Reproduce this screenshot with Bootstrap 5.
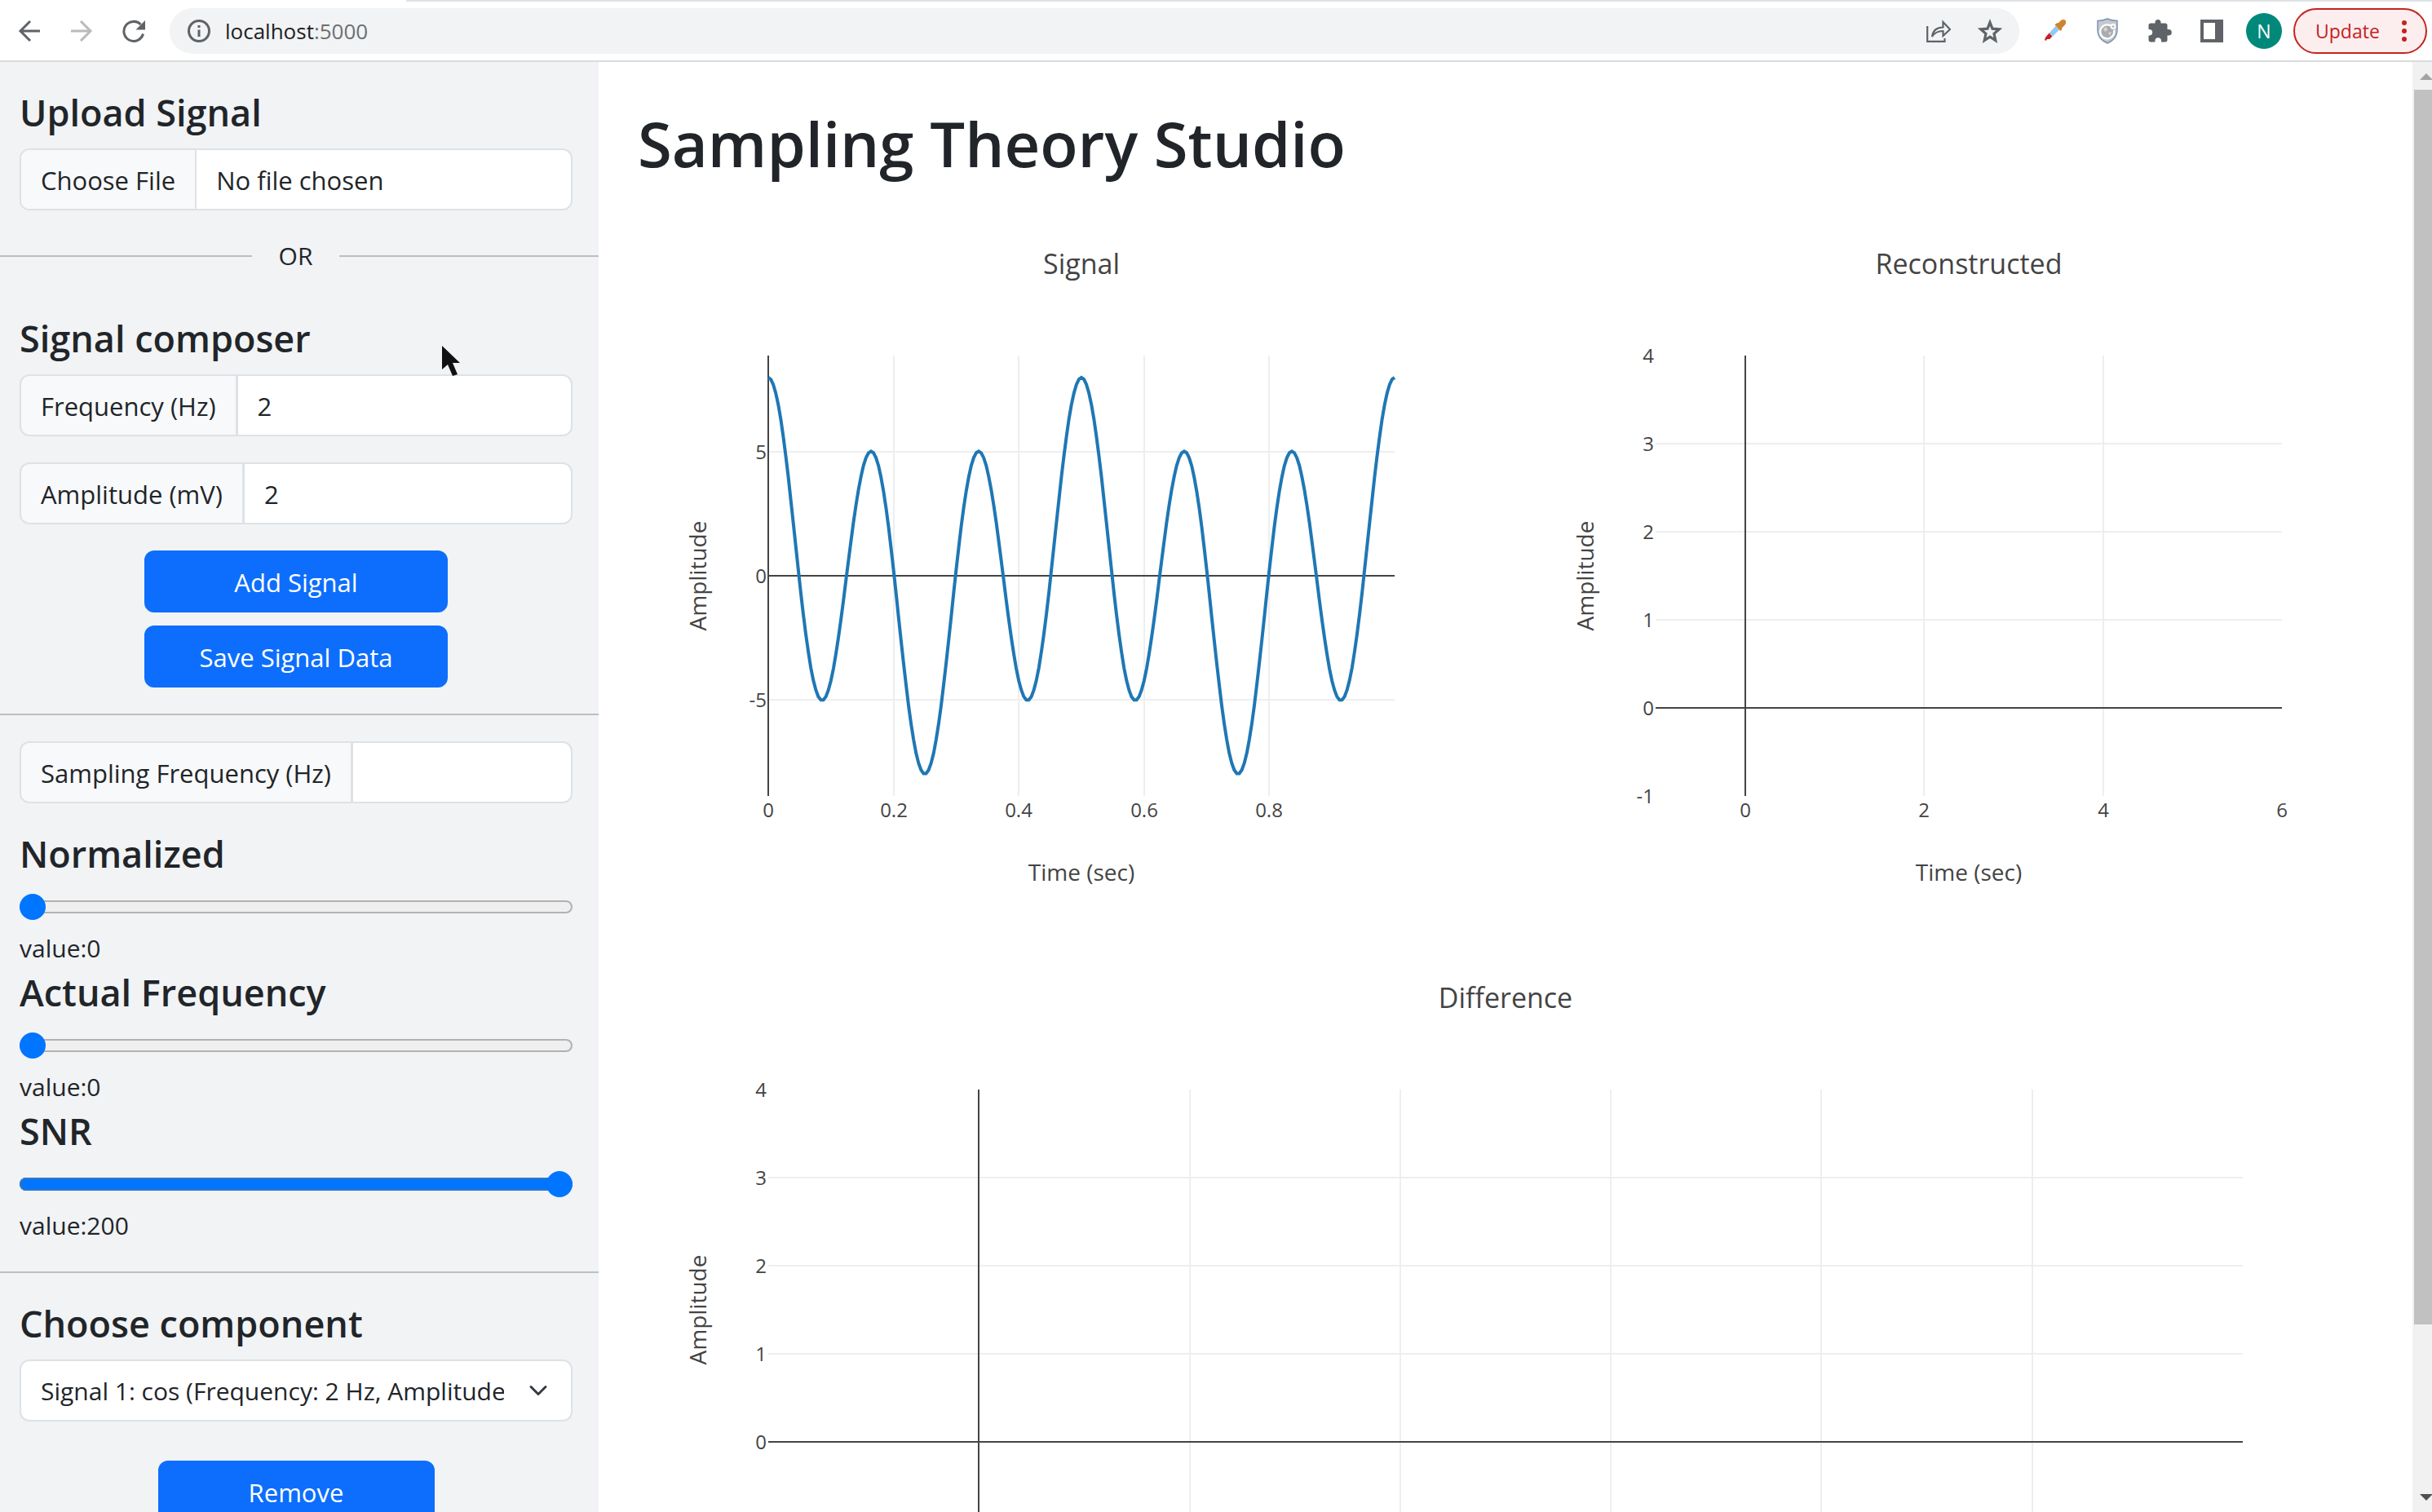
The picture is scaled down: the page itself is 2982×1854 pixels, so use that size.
<!DOCTYPE html>
<html lang="en">
<head>
<meta charset="utf-8">
<meta name="viewport" content="width=device-width, initial-scale=1">
<title>Sampling Theory Studio</title>
<link href="https://cdn.jsdelivr.net/npm/bootstrap@5.3.0/dist/css/bootstrap.min.css" rel="stylesheet">
<style>
  :root { font-size: 32px; }
  body { font-family: "Open Sans", "Noto Sans", sans-serif; font-size: 30px; line-height: 48px; color: #212529; background: #fff; }

  /* browser bar */
  .tab-edge { height: 2px; margin-left: 498px; background: #dee1e6; }
  .browser-bar { border-bottom: 2px solid #dadbdc; }
  .bar-row { height: 72px; padding: 0 6px 0 22px; }
  .bar-row button { background: none; border: 0; padding: 0; display: block; line-height: 0; color: #5f6368; }
  .nav-keys { gap: 36px; margin-right: 30px; }
  .nav-keys button:disabled { color: #bababa; }
  .nav-keys svg, .site-info svg { width: 28px; height: 28px; }
  .address { height: 56px; border-radius: 28px; background: #f1f3f4; padding: 0 21px 0 22px; }
  .address a { margin-left: 18px; font-size: 26px; color: #202124; text-decoration: none; }
  .address a span { color: #6b6f73; }
  .pill-icons { gap: 33px; }
  .ext-icons { gap: 34px; margin: 0 27px 0 29px; }
  .pill-icons svg, .ext-icons svg { width: 30px; height: 32px; }
  .avatar { width: 44px; height: 44px; background: #00897b; color: #fff; font-size: 23px; margin-right: 14px; }
  .bar-row .update-btn { display: flex; align-items: center; justify-content: space-between; width: 164px; height: 56px; border: 2px solid #c5221f; border-radius: 28px; background: #fceeee; color: #c5221f; font-size: 23px; line-height: 32px; padding: 0 23px 0 25px; }
  .update-btn svg { width: 6px; height: 28px; }

  /* sidebar */
  .side-panel { flex: 0 0 734px; background: #f1f3f5; padding-top: 32px; }
  .side-block { padding: 0 32px 0 24px; }
  .side-panel h4 { font-size: 45px; line-height: 60px; font-weight: 600; margin: 0 0 14px; }
  .side-panel hr { border-top: 2px solid #212529; opacity: .25; margin: 32px 0; }
  .or-row { margin: 32px 0 47px; }
  .or-row hr { margin: 0; flex: 1 1 318px; }
  .or-row hr:first-child { flex-basis: 309px; }
  .or-row span { width: 107px; text-align: center; }
  .side-panel .form-control, .side-panel .form-select, .side-panel .input-group-text, .side-panel .btn { font-size: 31px; line-height: 48px; border-width: 2px; padding-top: 13px; padding-bottom: 11px; }
  .side-panel .form-control, .side-panel .form-select, .side-panel .input-group-text { border-color: #dee2e6; color: #212529; }
  .side-panel .input-group > .form-control { margin-left: -2px; }
  .side-panel .input-group-text { background: #f8f9fa; }
  .side-panel .form-control::file-selector-button { background: #f8f9fa; border-right: 2px solid #dee2e6; padding-top: 13px; padding-bottom: 11px; margin-top: -13px; margin-bottom: -11px; }
  .side-panel .form-select { font-size: 30px; padding-right: 82px; background-size: 32px 24px; }
  .side-panel .btn { background: #0d6efd; }
  .w-55 { width: 55%; }
  .side-panel .form-range { display: block; height: 41px; margin-bottom: 7px; }
  .form-range::-webkit-slider-runnable-track { height: 16px; border-radius: 8px; background: #efefef; box-shadow: inset 0 0 0 2px #b2b2b2; }
  .form-range.is-full::-webkit-slider-runnable-track { background: #0075ff; box-shadow: inset 0 0 0 2px #3475c0; }
  .form-range::-webkit-slider-thumb { width: 32px; height: 32px; margin-top: -8px; background: #0075ff; }
  .pointer { position: absolute; left: 541px; top: 422px; width: 28px; height: 40px; }

  /* main pane */
  .main-pane { padding-left: 48px; }
  .main-pane h1 { font-size: 76px; line-height: 96px; font-weight: 600; margin: 52px 0 12px; }
  .plot { height: 900px; }
  .plot svg { display: block; width: 100%; height: 100%; }
  .plot text { font-family: "Open Sans", sans-serif; fill: #444; }
  .wide { margin-right: 48px; }

  .scroll-rail { flex: 0 0 24px; background: #f1f1f1; padding: 12px 0 12px 2px; }
  .scroll-rail svg { width: 20px; height: 12px; margin-left: 3px; }
  .scroll-thumb { flex: 0 1 1514px; margin: 10px 0 auto; background: #c1c1c1; }
</style>
<script src="https://cdn.jsdelivr.net/npm/bootstrap@5.3.0/dist/js/bootstrap.bundle.min.js"></script>
</head>
<body class="vh-100 overflow-hidden d-flex flex-column">

<header class="browser-bar flex-shrink-0">
  <div class="tab-edge"></div>
  <div class="bar-row d-flex align-items-center">
    <div class="nav-keys d-flex">
      <button type="button" aria-label="Back"><svg viewBox="0 0 28 28" fill="none" stroke="currentColor" stroke-width="3"><path d="M27 14H4M15 2L3 14l12 12"/></svg></button>
      <button type="button" aria-label="Forward" disabled><svg viewBox="0 0 28 28" fill="none" stroke="currentColor" stroke-width="3"><path d="M1 14h23M13 2l12 12-12 12"/></svg></button>
      <button type="button" aria-label="Reload"><svg viewBox="0 0 28 28"><path d="M25.500 17.500A12 12 0 1 1 22.500 6" fill="none" stroke="currentColor" stroke-width="3"/><path d="M28 1v11.500H16.500z" fill="currentColor"/></svg></button>
    </div>
    <div class="address d-flex align-items-center flex-grow-1">
      <button type="button" class="site-info" aria-label="Site information"><svg viewBox="0 0 28 28"><circle cx="14" cy="14" r="12.500" fill="none" stroke="currentColor" stroke-width="3"/><path d="M12.500 12.500h3V21h-3zM12.500 7h3v3h-3z" fill="currentColor"/></svg></button>
      <a class="me-auto" href="#">localhost<span>:5000</span></a>
      <div class="pill-icons d-flex">
        <button type="button" aria-label="Share"><svg viewBox="0 0 30 32" fill="none" stroke="currentColor" stroke-width="2.200"><path d="M1.200 10v18.800H22.500V25"/><path d="M7 23c1-7 5-11.500 13.500-11.500V5l8.500 9-8.500 8v-6c-6 0-10.500 2-13.500 7z"/></svg></button>
        <button type="button" aria-label="Bookmark"><svg viewBox="0 0 30 32" fill="none" stroke="currentColor" stroke-width="3.200"><path d="M15 5.500l3 7.700 8.200.7-6.200 5.500 1.800 8.100-6.800-4.300-6.800 4.300 1.800-8.100-6.200-5.500 8.200-.7z"/></svg></button>
      </div>
    </div>
    <div class="ext-icons d-flex">
      <button type="button" aria-label="Color picker"><svg viewBox="0 0 30 32"><path d="M15.500 10l4.500 4.500-8 8-4.500-4z" fill="#90caf9"/><path d="M7.500 18.500l4 4-3.500 3.500-3 0-1.500 2-1.500-1 1-3z" fill="#c62020"/><path d="M14.500 8.500l2-2 2.500-.5 3-3c2-1.500 4.500-1.500 5.500 0s1 4-1 6l-3 3-.5 2.500-1.500 1.500z" fill="#cd8431"/></svg></button>
      <button type="button" aria-label="Shield"><svg viewBox="0 0 30 32"><path d="M15 1c4 2 8 2.500 12 2.500V15c0 8-5 13-12 16C8 28 3 23 3 15V3.500C7 3.500 11 3 15 1z" fill="#c5c9ce" stroke="#7e94b0" stroke-width="1.500"/><circle cx="15" cy="16.500" r="8" fill="#a9abae"/><path d="M19 9.500a8.500 8.500 0 1 0 4 5.500" fill="none" stroke="#fff" stroke-width="2.200"/><circle cx="22" cy="10.500" r="2.500" fill="#b9bcc0" stroke="#fff" stroke-width="1.800"/><path d="M10 13l4-2 1 4-3 2zM16 18l4-1-2 5z" fill="#d2d4d7"/></svg></button>
      <button type="button" aria-label="Extensions"><svg viewBox="0 0 30 32" fill="currentColor"><path d="M9.500 5.500a3.500 3.500 0 0 1 7 0v1H22c1.500 0 2.500 1 2.500 2.500V14H26a3.800 3.800 0 0 1 0 7.600h-1.500V27c0 1.500-1 2.500-2.500 2.500h-5V28a3.800 3.800 0 0 0-7.600 0v1.500H4c-1.500 0-2.500-1-2.500-2.500v-5.500H3A3.800 3.800 0 0 0 3 14H1.500V9c0-1.500 1-2.500 2.500-2.500h5.500z"/></svg></button>
      <button type="button" aria-label="Side panel"><svg viewBox="0 0 30 32" fill="currentColor"><path fill-rule="evenodd" d="M1 2h28v28H1zM5 6v20h14V6z"/></svg></button>
    </div>
    <span class="avatar rounded-circle d-flex align-items-center justify-content-center">N</span>
    <button type="button" class="update-btn">Update<svg viewBox="0 0 6 28" fill="currentColor"><circle cx="3" cy="4" r="3"/><circle cx="3" cy="14" r="3"/><circle cx="3" cy="24" r="3"/></svg></button>
  </div>
</header>

<div class="d-flex flex-grow-1 overflow-hidden">
  <aside class="side-panel overflow-hidden">
    <div class="side-block">
      <h4><label for="signalFile">Upload Signal</label></h4>
      <input class="form-control" type="file" id="signalFile">
    </div>
    <div class="or-row d-flex align-items-center"><hr><span>OR</span><hr></div>
    <div class="side-block">
      <h4>Signal composer</h4>
      <div class="input-group mb-3">
        <label class="input-group-text" for="freq">Frequency (Hz)</label>
        <input class="form-control" id="freq" type="text" value="2">
      </div>
      <div class="input-group">
        <label class="input-group-text" for="amp">Amplitude (mV)</label>
        <input class="form-control" id="amp" type="text" value="2">
      </div>
      <div class="d-flex flex-column align-items-center">
        <button type="button" class="btn btn-primary w-55 mt-3">Add Signal</button>
        <button type="button" class="btn btn-primary w-55 mt-2">Save Signal Data</button>
      </div>
    </div>
    <hr>
    <div class="side-block">
      <div class="input-group mb-3">
        <label class="input-group-text" for="fs">Sampling Frequency (Hz)</label>
        <input class="form-control" id="fs" type="text">
      </div>
      <h4><label for="norm">Normalized</label></h4>
      <input class="form-range" id="norm" type="range" min="0" max="10" value="0">
      <div>value:<output for="norm">0</output></div>
      <h4><label for="actual">Actual Frequency</label></h4>
      <input class="form-range" id="actual" type="range" min="0" max="100" value="0">
      <div>value:<output for="actual">0</output></div>
      <h4><label for="snr">SNR</label></h4>
      <input class="form-range is-full" id="snr" type="range" min="0" max="200" value="200">
      <div>value:<output for="snr">200</output></div>
    </div>
    <hr>
    <div class="side-block">
      <h4><label for="component">Choose component</label></h4>
      <select class="form-select" id="component">
        <option>Signal 1: cos (Frequency: 2 Hz, Amplitude: 2 mV)</option>
        <option>Signal 2: cos (Frequency: 6 Hz, Amplitude: 6 mV)</option>
      </select>
      <div class="text-center mt-4"><button type="button" class="btn btn-primary w-50">Remove</button></div>
    </div>
  </aside>

  <main class="main-pane flex-grow-1 overflow-hidden">
    <h1>Sampling Theory Studio</h1>
    <div class="row g-0">
      <div class="col-6"><div class="plot" id="signalPlot"></div></div>
      <div class="col-6"><div class="plot" id="reconPlot"></div></div>
      <div class="col-12"><div class="plot wide" id="diffPlot"></div></div>
    </div>
  </main>

  <div class="scroll-rail d-flex flex-column overflow-hidden" aria-hidden="true">
    <svg viewBox="0 0 20 12"><path d="M12 2l8 8H4z" fill="#a3a3a3"/></svg>
    <div class="scroll-thumb"></div>
    <svg viewBox="0 0 20 12"><path d="M12 10l8-8H4z" fill="#505050"/></svg>
  </div>
</div>

<svg class="pointer" viewBox="0 0 28 40" aria-hidden="true"><path d="M1 2v29l7-6 6 14 6-2-6-14h9z" fill="#111"/></svg>

<script>
  // Chart margins and tick settings shared by the three plots
  const M = { l: 160, r: 160, t: 200, b: 160 };

  function line(x1, y1, x2, y2, color) {
    return `<line x1="${x1}" y1="${y1}" x2="${x2}" y2="${y2}" stroke="${color}" stroke-width="2" shape-rendering="crispEdges"/>`;
  }
  function label(x, y, size, anchor, str, extra) {
    return `<text x="${x}" y="${y}" font-size="${size}" text-anchor="${anchor}" ${extra || ''}>${str}</text>`;
  }
  function draw(id, o) {
    const el = document.getElementById(id);
    const w = el.clientWidth, h = el.clientHeight;
    const L = M.l, R = w - M.r, T = M.t, B = h - M.b;
    const X = v => Math.round(L + (v - o.x[0]) / (o.x[1] - o.x[0]) * (R - L));
    const Y = v => Math.round(B - (v - o.y[0]) / (o.y[1] - o.y[0]) * (B - T));
    let s = '';
    for (const v of o.xt) if (v !== 0 && v !== o.x[1]) s += line(X(v), T, X(v), B, '#eee');
    for (const v of o.yt) if (v !== 0 && v !== o.y[0] && v !== o.y[1]) s += line(L, Y(v), R, Y(v), '#eee');
    if (o.f) {
      const pts = [];
      for (let i = 0; i <= 250; i++) {
        const t = i / 250;
        pts.push((L + t * (R - L)).toFixed(1) + ',' + (B - (o.f(t) - o.y[0]) / (o.y[1] - o.y[0]) * (B - T)).toFixed(1));
      }
      o.curve = `<polyline points="${pts.join(' ')}" fill="none" stroke="#1f77b4" stroke-width="4"/>`;
    }
    s += line(X(0), T, X(0), B, '#444') + line(L, Y(0), R, Y(0), '#444') + (o.curve || '');
    if (o.xLabels !== false) {
      for (const v of o.xt) s += label(X(v), B + 26, 24, 'middle', v);
      s += label((L + R) / 2, B + 104, 28, 'middle', 'Time (sec)');
    }
    for (const v of o.yt) s += label(L - 2, Y(v) + 9, 24, 'end', v);
    const cy = (T + B) / 2;
    s += label(w / 2, 100, 34, 'middle', o.title);
    s += label(84, cy, 28, 'middle', 'Amplitude', `transform="rotate(-90 84 ${cy})"`);
    el.innerHTML = `<svg role="img" aria-label="${o.title}">${s}</svg>`;
  }
  function drawAll() {
    draw('signalPlot', { title: 'Signal', x: [0, 1], y: [-8.889, 8.889], xt: [0, 0.2, 0.4, 0.6, 0.8], yt: [-5, 0, 5],
      f: t => 2 * Math.cos(4 * Math.PI * t) + 6 * Math.cos(12 * Math.PI * t) });
    draw('reconPlot', { title: 'Reconstructed', x: [-1, 6], y: [-1, 4], xt: [0, 2, 4, 6], yt: [-1, 0, 1, 2, 3, 4] });
    draw('diffPlot', { title: 'Difference', x: [-1, 6], y: [-1, 4], xt: [0, 1, 2, 3, 4, 5, 6], yt: [0, 1, 2, 3, 4], xLabels: false });
  }
  drawAll();
  addEventListener('resize', drawAll);

  document.querySelectorAll('.form-range').forEach(r => r.addEventListener('input', () => {
    r.nextElementSibling.querySelector('output').textContent = r.value;
    r.classList.toggle('is-full', r.value === r.max);
  }));
</script>
</body>
</html>
